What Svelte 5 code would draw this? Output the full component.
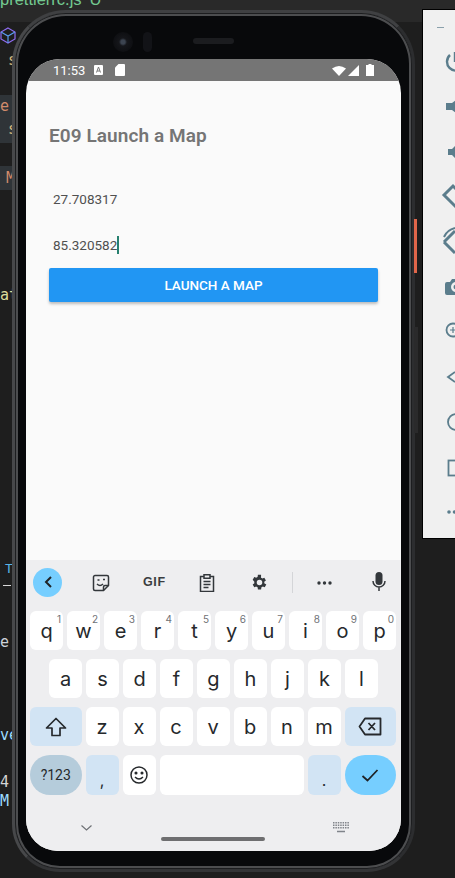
<script>
	const row1 = [['q','1'],['w','2'],['e','3'],['r','4'],['t','5'],['y','6'],['u','7'],['i','8'],['o','9'],['p','0']];
	const row2 = ['a','s','d','f','g','h','j','k','l'];
	const row3 = ['z','x','c','v','b','n','m'];
</script>

<div class="desktop">
	<!-- bits of the editor peeking out behind the emulator -->
	<div class="editor">
		<div class="tabbar"><span class="tabname">prettierrc.js</span><span class="tabmark">U</span></div>
		<svg class="cube" width="16" height="17" viewBox="0 0 16 17" fill="none" stroke="#8f6cf0" stroke-width="1.2"><path d="M8 1l7 4v7l-7 4-7-4V5z"/><path d="M1 5l7 4 7-4M8 9v7" stroke="#5a9cf0"/></svg>
		<span class="frag s1">s</span>
		<span class="hl h1"></span>
		<span class="frag e1">e</span>
		<span class="frag s2">s</span>
		<span class="hl h2"></span>
		<span class="frag m1">M</span>
		<span class="frag at">at</span>
		<span class="frag tee">T</span>
		<span class="hl under"></span>
		<span class="frag e2">e.</span>
		<span class="frag v1">ve</span>
		<span class="frag n4">4</span>
		<span class="frag m2">M</span>
	</div>

	<div class="tools">
		<div class="dash"></div>
		<svg width="32" height="496" viewBox="0 0 32 496" fill="none" stroke="#5b7d8c" stroke-width="2.4">
			<path d="M27 13A9 9 0 1 0 39 13M32 10v10"/>
			<path d="M23 61h6l7-5v17l-7-5h-6z" fill="#5b7d8c" stroke="none"/>
			<path d="M25 107h4l6-6v18l-6-6h-4z" fill="#5b7d8c" stroke="none"/>
			<path d="M21 153l9-9 16 16-9 9z" stroke-width="3"/>
			<path d="M21 200l11-11M21 200l11 11" stroke-width="3"/>
			<path d="M21 195Q24 188 32 186" stroke-width="2"/>
			<path d="M24 240h3l2-3h8v16H24a2 2 0 0 1-2-2v-9a2 2 0 0 1 2-2z" fill="#5b7d8c" stroke="none"/>
			<circle cx="33" cy="245" r="5" fill="#f0f0f0" stroke="none"/>
			<circle cx="33" cy="245" r="2.500" fill="#5b7d8c" stroke="none"/>
			<circle cx="30" cy="288" r="6.500" stroke-width="1.800"/>
			<path d="M30 285v6M27 288h6" stroke-width="1.200"/>
			<path d="M32 330l-7 5 7 5" stroke-width="1.800"/>
			<circle cx="33" cy="380" r="8" stroke-width="1.800"/>
			<rect x="25.500" y="418.500" width="14" height="15" stroke-width="1.800"/>
			<circle cx="26" cy="470" r="1.800" fill="#5b7d8c" stroke="none"/>
			<circle cx="31.500" cy="470" r="1.800" fill="#5b7d8c" stroke="none"/>
		</svg>
	</div>

	<div class="phone">
		<div class="camera"></div>
		<div class="sensor"></div>
		<div class="speaker"></div>
		<div class="screen">
			<div class="status">
				<span class="clock">11:53</span>
				<svg width="9" height="10" viewBox="0 0 9 10"><rect width="9" height="10" rx="1" fill="#fff"/><path d="M2.500 7.500L4.500 2l2 5.500M3.200 6h2.600" stroke="#777" fill="none"/></svg>
				<svg class="sd" width="10" height="12" viewBox="0 0 10 12"><path d="M3.500 0H9a1 1 0 0 1 1 1v10a1 1 0 0 1-1 1H1a1 1 0 0 1-1-1V3.500z" fill="#fff"/></svg>
				<span class="grow"></span>
				<svg class="wifi" width="14" height="11" viewBox="0 0 14 11"><path d="M0 3.500Q7-1.500 14 3.500L7 11z" fill="#fff"/></svg>
				<svg class="signal" width="12" height="11" viewBox="0 0 12 11"><path d="M0 11L11 0v11z" fill="#fff"/></svg>
				<svg width="8" height="12" viewBox="0 0 8 12"><path d="M2.500 0h3v1H8v11H0V1h2.500z" fill="#fff"/></svg>
			</div>
			<div class="app">
				<h1>E09 Launch a Map</h1>
				<div class="field first">27.708317</div>
				<div class="field second">85.320582<span class="caret"></span></div>
				<button class="launch" type="button">LAUNCH A MAP</button>
			</div>
			<div class="keyboard">
				<div class="toolbar">
					<span class="back"><svg width="10" height="14" viewBox="0 0 10 14" fill="none" stroke="#1f2327" stroke-width="2"><path d="M8 2L3 7l5 5"/></svg></span>
					<svg class="sticker" width="18" height="18" viewBox="0 0 18 18" fill="none" stroke="#33373b" stroke-width="1.500"><path d="M1.500 3A1.500 1.500 0 0 1 3 1.500h12A1.500 1.500 0 0 1 16.500 3v8.500l-5 5H3A1.500 1.500 0 0 1 1.500 15z"/><path d="M11.500 16.500V13a1.500 1.500 0 0 1 1.500-1.500h3.500M5 10q3 3 6 0M5.500 6h2M11 5.500h2"/></svg>
					<span class="gif">GIF</span>
					<svg class="clip" width="16" height="18" viewBox="0 0 16 18" fill="none" stroke="#33373b" stroke-width="1.500"><path d="M5 2.500H1.500v15h13v-15H11"/><path d="M5 .8h6v3.400H5zM4.500 7.500h7M4.500 10.500h7M4.500 13.500h5"/></svg>
					<svg class="gear" width="19" height="19" viewBox="0 0 24 24"><path fill="#33373b" fill-rule="evenodd" d="M19.400 13a7.500 7.500 0 0 0 0-2l2.100-1.600-2-3.500-2.500 1a7.500 7.500 0 0 0-1.700-1L15.400 2.200h-4l-.4 2.700a7.500 7.500 0 0 0-1.700 1l-2.500-1-2 3.500L6.900 11a7.500 7.500 0 0 0 0 2l-2.100 1.600 2 3.500 2.500-1a7.500 7.500 0 0 0 1.700 1l.4 2.700h4l.4-2.700a7.500 7.500 0 0 0 1.700-1l2.500 1 2-3.500zM13.400 15.500a3.500 3.500 0 1 1 0-7 3.500 3.500 0 0 1 0 7z" transform="translate(-1.400,0)"/></svg>
					<span class="divider"></span>
					<svg class="more" width="15" height="4" viewBox="0 0 15 4" fill="#33373b"><circle cx="2" cy="2" r="1.700"/><circle cx="7.500" cy="2" r="1.700"/><circle cx="13" cy="2" r="1.700"/></svg>
					<svg class="mic" width="14" height="20" viewBox="0 0 14 20" fill="none"><rect x="3.500" y="0" width="7" height="13" rx="3.500" fill="#33373b"/><path d="M1 9a6 6 0 0 0 12 0M7 15v4" stroke="#33373b" stroke-width="1.500"/></svg>
				</div>
				<div class="row">
					{#each row1 as [key, num]}
						<div class="key"><span class="num">{num}</span>{key}</div>
					{/each}
				</div>
				<div class="row inset">
					{#each row2 as key}
						<div class="key">{key}</div>
					{/each}
				</div>
				<div class="row">
					<div class="key mod wide"><svg width="22" height="20" viewBox="0 0 22 20" fill="none" stroke="#26292c" stroke-width="1.700" stroke-linejoin="round"><path d="M11 1.500L1.500 11H7v7.500h8V11h5.500z"/></svg></div>
					{#each row3 as key}
						<div class="key">{key}</div>
					{/each}
					<div class="key mod wide"><svg width="24" height="19" viewBox="0 0 24 19" fill="none" stroke="#26292c" stroke-width="1.800" stroke-linejoin="round"><path d="M7 1.500h15.500v16H7L1.500 9.500zM10.500 6l6.500 7M17 6l-6.500 7"/></svg></div>
				</div>
				<div class="row bottom">
					<div class="key sym wide">?123</div>
					<div class="key mod comma">,</div>
					<div class="key"><svg width="18" height="18" viewBox="0 0 18 18" fill="none" stroke="#26292c" stroke-width="1.500"><circle cx="9" cy="9" r="8"/><path d="M5 11q4 4 8 0"/><circle cx="6" cy="7" r=".8" fill="#26292c"/><circle cx="12" cy="7" r=".8" fill="#26292c"/></svg></div>
					<div class="key space"></div>
					<div class="key mod dot">.</div>
					<div class="key enter wide"><svg width="18" height="14" viewBox="0 0 18 14" fill="none" stroke="#1f2327" stroke-width="1.800"><path d="M1.500 8l5 4.500L16.500 2"/></svg></div>
				</div>
				<div class="navbar">
					<svg width="11" height="6" viewBox="0 0 11 6" fill="none" stroke="#6f7276" stroke-width="1.200"><path d="M.5.500l5 4.500 5-4.500"/></svg>
					<span class="handle"></span>
					<svg width="16" height="11" viewBox="0 0 16 11" fill="none" stroke="#80848a"><path d="M0 .8h16M0 3.300h16M0 5.800h16" stroke-width="1.400" stroke-dasharray="1.500 .9"/><path d="M4 9.500h8" stroke-width="1.600"/></svg>
				</div>
			</div>
		</div>
	</div>

	<div class="accent"></div>
	<div class="rail"></div>
</div>

<style>
	:global(body) {
		margin: 0;
		background: #1f1f1f;
	}

	.desktop {
		position: relative;
		width: 455px;
		height: 878px;
		overflow: hidden;
		background: #1e1e1e;
		font-family: Roboto, "Liberation Sans", sans-serif;
	}

	.editor {
		position: absolute;
		inset: 0;
		font-family: "DejaVu Sans Mono", monospace;
		font-size: 15px;
	}

	.tabbar {
		height: 22px;
		display: flex;
		align-items: flex-start;
		gap: 8px;
		background: #292929;
		color: #73c991;
		font-family: "Liberation Sans", sans-serif;
		font-size: 16.500px;
		line-height: 16px;
		overflow: hidden;
	}

	.tabname,
	.tabmark {
		margin-top: -9px;
	}

	.cube,
	.frag,
	.hl {
		position: absolute;
	}

	.cube {
		left: 0;
		top: 27px;
	}

	.hl {
		left: 0;
		width: 13px;
		background: #2f3438;
	}

	.h1 {
		top: 95px;
		height: 48px;
	}

	.h2 {
		top: 166px;
		height: 24px;
	}

	.under {
		left: 3px;
		top: 585px;
		width: 8px;
		height: 1px;
		background: #d8d8d8;
	}

	.frag {
		line-height: 16px;
	}

	.s1 { left: 8px; top: 52px; color: #d7ba7d; }
	.e1 { left: 0; top: 98px; color: #d18b6c; }
	.s2 { left: 8px; top: 121px; color: #d7ba7d; }
	.m1 { left: 6px; top: 170px; color: #d18b6c; }
	.at { left: 0; top: 287px; color: #dcdc9d; }
	.tee { left: 5px; top: 561px; color: #58b4e8; font-size: 13px; }
	.e2 { left: 0; top: 634px; color: #cdd3da; }
	.v1 { left: 0; top: 727px; color: #9cdcfe; }
	.n4 { left: 0; top: 774px; color: #d4d4d4; }
	.m2 { left: 0; top: 793px; color: #9cdcfe; }

	.tools {
		position: absolute;
		left: 422px;
		top: 9px;
		width: 33px;
		height: 530px;
		background: #f0f0f0;
		border: 1px solid #000;
		border-right: none;
		box-sizing: border-box;
	}

	.dash {
		width: 7px;
		height: 1px;
		margin: 17px 0 14px 14px;
		background: #8aa0ab;
	}

	.tools svg {
		display: block;
	}

	.accent {
		position: absolute;
		left: 414px;
		top: 219px;
		width: 3px;
		height: 54px;
		background: #e0664a;
	}

	.rail {
		position: absolute;
		left: 414px;
		top: 327px;
		width: 4px;
		height: 106px;
		background: #2a2a2b;
	}

	.phone {
		position: absolute;
		left: 12px;
		top: 10px;
		width: 403px;
		height: 862px;
		box-sizing: border-box;
		padding: 46px 11px 0;
		border-radius: 54px 54px 48px 48px;
		background: #08090b;
		border: 3px solid;
		border-color: #3f4042 #2c2d2f #333436 #47484a;
		box-shadow: inset 0 0 0 1px #1c1d1f, inset 0 0 0 3px #4c4d4f;
	}

	.camera {
		position: absolute;
		left: 98px;
		top: 19px;
		width: 20px;
		height: 20px;
		border-radius: 50%;
		background: radial-gradient(circle, #3c4450 0 2px, #15161a 4px, #0e0f12 10px);
	}

	.sensor {
		position: absolute;
		left: 128px;
		top: 19px;
		width: 9px;
		height: 20px;
		border-radius: 5px;
		background: #121317;
	}

	.speaker {
		position: absolute;
		left: 178px;
		top: 25px;
		width: 41px;
		height: 6px;
		border-radius: 3px;
		background: #1b1c1f;
	}

	.screen {
		display: flex;
		flex-direction: column;
		width: 375px;
		height: 792px;
		border-radius: 34px 34px 32px 32px;
		overflow: hidden;
		background: #fafafa;
	}

	.status {
		display: flex;
		align-items: center;
		gap: 6px;
		height: 22px;
		flex: none;
		padding: 0 27px;
		background: #757575;
		color: #fff;
		font-size: 13px;
	}

	.clock {
		margin-right: 3px;
	}

	.sd {
		margin-left: 6px;
	}

	.grow {
		flex: 1;
	}

	.signal {
		margin-left: -4px;
	}

	.app {
		flex: 1;
		padding: 0 23px;
		min-height: 0;
	}

	h1 {
		margin: 44px 0 0;
		font-size: 19px;
		line-height: 22px;
		font-weight: 600;
		letter-spacing: 0.08px;
		color: #757575;
	}

	.field {
		padding-left: 4px;
		font-size: 13.500px;
		line-height: 20px;
		color: #505050;
	}

	.first {
		margin-top: 42px;
	}

	.second {
		margin-top: 26px;
	}

	.caret {
		display: inline-block;
		width: 2px;
		height: 18px;
		vertical-align: -4px;
		background: #26806f;
	}

	.launch {
		display: block;
		width: 329px;
		height: 34px;
		margin-top: 13px;
		padding: 0;
		border: none;
		border-radius: 2px;
		background: #2196f3;
		color: #fff;
		font: 500 13.500px/34px Roboto, sans-serif;
		box-shadow: 0 2px 3px rgba(0, 0, 0, 0.25);
	}

	.keyboard {
		flex: none;
		height: 291px;
		background: #eeeef0;
		box-sizing: border-box;
		padding: 0 4px;
	}

	.toolbar {
		position: relative;
		height: 51px;
	}

	.toolbar > * {
		position: absolute;
	}

	.back {
		left: 3px;
		top: 7.500px;
		width: 29px;
		height: 29px;
		border-radius: 50%;
		background: #76ceff;
		display: flex;
		align-items: center;
		justify-content: center;
	}

	.sticker { left: 62px; top: 14px; }
	.gif { left: 113px; top: 14px; font: 700 12.500px/16px "Liberation Sans", sans-serif; letter-spacing: 0.6px; color: #3a3d40; }
	.clip { left: 169px; top: 14px; }
	.gear { left: 220px; top: 13px; }
	.divider { left: 262px; top: 12px; width: 1px; height: 21px; background: #d4d5d8; }
	.more { left: 287px; top: 20.500px; }
	.mic { left: 342px; top: 12px; }

	.row {
		display: flex;
		gap: 4px;
		height: 39px;
		margin-bottom: 9px;
	}

	.row.inset {
		padding-left: 19px;
	}

	.row.bottom {
		height: 40px;
	}

	.key {
		position: relative;
		display: flex;
		align-items: center;
		justify-content: center;
		flex: none;
		width: 33px;
		border-radius: 6px;
		background: #fff;
		font-family: Inter, Roboto, sans-serif;
		font-size: 20px;
		color: #26292c;
	}

	.num {
		position: absolute;
		top: 2px;
		right: 2px;
		font-size: 10px;
		line-height: 12px;
		color: #6f7276;
	}

	.wide {
		width: 51.500px;
	}

	.mod {
		background: #d2e4f4;
	}

	.sym {
		border-radius: 20px;
		background: #b5ccdb;
		font-family: Roboto, sans-serif;
		font-size: 14px;
	}

	.comma,
	.dot {
		align-items: flex-end;
		padding-bottom: 5px;
		box-sizing: border-box;
		font-size: 16px;
	}

	.space {
		width: 144px;
	}

	.enter {
		border-radius: 20px;
		background: #76ceff;
	}

	.navbar {
		display: flex;
		align-items: center;
		justify-content: space-between;
		height: 47px;
		padding: 0 48px 0 51px;
		position: relative;
	}

	.handle {
		position: absolute;
		left: 131px;
		top: 33px;
		width: 104px;
		height: 4px;
		border-radius: 2px;
		background: #6e6e70;
	}
</style>
